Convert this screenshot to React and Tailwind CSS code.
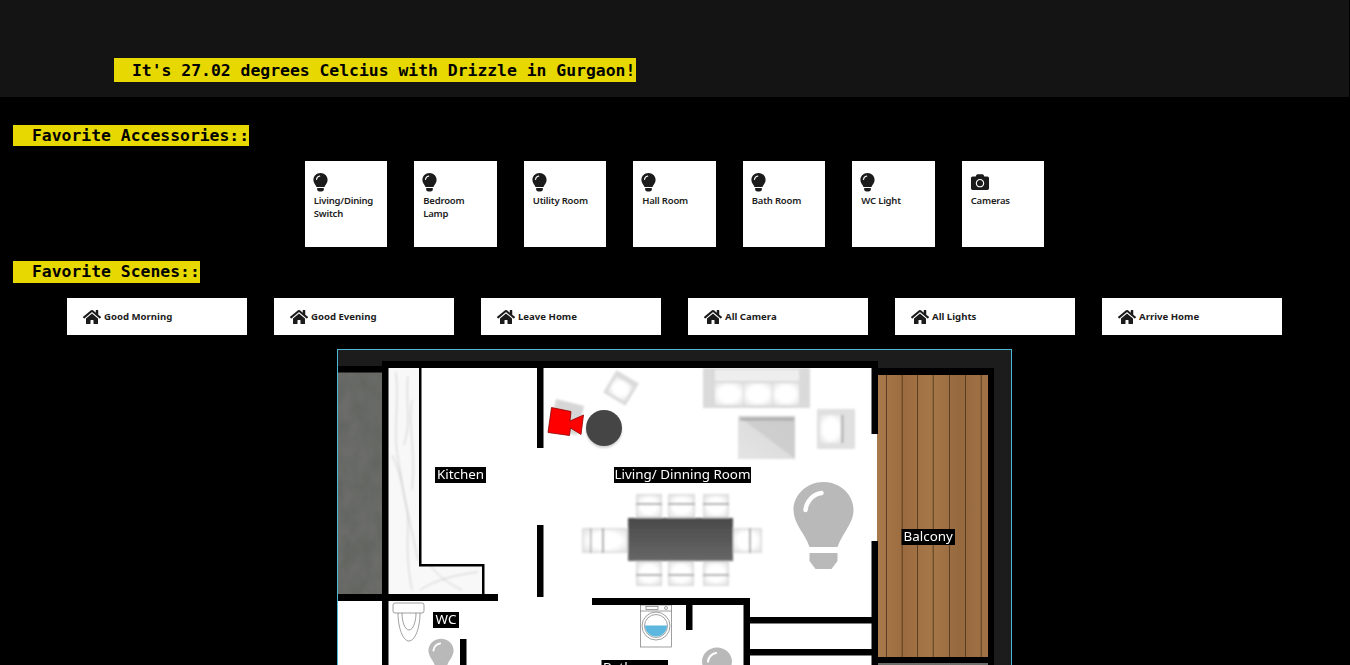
import React from 'react'
import { FaCamera, FaHome } from 'react-icons/fa'

const accessories = [
  { name: 'Living/Dining Switch', icon: 'bulb' },
  { name: 'Bedroom Lamp', icon: 'bulb' },
  { name: 'Utility Room', icon: 'bulb' },
  { name: 'Hall Room', icon: 'bulb' },
  { name: 'Bath Room', icon: 'bulb' },
  { name: 'WC Light', icon: 'bulb' },
  { name: 'Cameras', icon: 'camera' },
]

const scenes = ['Good Morning', 'Good Evening', 'Leave Home', 'All Camera', 'All Lights', 'Arrive Home']

function BulbIcon() {
  return (
    <svg width="15" height="19" viewBox="0 0 15 19" className="block -ml-px">
      <path d="M7.500 0C3.400 0 .4 3 .4 6.900c0 2.900 2.200 4.600 3.100 7.100h8c.9-2.500 3.100-4.200 3.100-7.100C14.600 3 11.600 0 7.500 0z" fill="#1b1b1b" />
      <path d="M3.500 6.500C3.700 4.700 5 3.300 6.800 3" fill="none" stroke="#fff" strokeWidth="1.100" strokeLinecap="round" />
      <path d="M4.200 15h6.600v1.200c0 1.300-1 2.300-2.300 2.300h-2c-1.300 0-2.300-1-2.300-2.300z" fill="#1b1b1b" />
    </svg>
  )
}

function Heading({ children, className }) {
  return (
    <div className={`w-fit bg-[#e6d800] font-['DejaVu_Sans_Mono',monospace] font-bold text-[16.4px] text-black whitespace-nowrap flex items-center ${className}`}>
      {children}
    </div>
  )
}

function Tile({ item }) {
  return (
    <div className="w-[82.5px] h-[86px] bg-white pl-[9px] pt-[12px] text-[#1c1c1c]">
      <div className="h-[20px]">
        {item.icon === 'bulb' ? <BulbIcon /> : <FaCamera className="w-[18px] h-[18px] text-[#1b1b1b]" />}
      </div>
      <div className="mt-px text-[9.5px] leading-[13px] font-semibold font-['Noto_Sans',sans-serif] tracking-[-0.2px] pr-[8px]">
        {item.name}
      </div>
    </div>
  )
}

function Scene({ name }) {
  return (
    <div className="w-[180px] h-[37px] bg-white pl-[16px] flex items-center gap-[3px] text-[#1c1c1c]">
      <FaHome className="w-[18px] h-[18px] text-[#1b1b1b]" />
      <span className="pt-px text-[9.6px] font-bold font-['Noto_Sans',sans-serif]">{name}</span>
    </div>
  )
}

function Bulb({ x, y, s = 1 }) {
  return (
    <g transform={`translate(${x} ${y}) scale(${s})`}>
      <path d="M0 -29C-17 -29 -30 -16 -30 -1C-30 13 -18 23 -14 36H14C18 23 30 13 30 -1C30 -16 17 -29 0 -29Z" fill="#b9b9b9" />
      <path d="M-18 -1C-17 -10 -10 -17 -2 -18" fill="none" stroke="#fff" strokeWidth="4.500" strokeLinecap="round" />
      <path d="M-14 42H14V50L8 58H-8L-14 50Z" fill="#b9b9b9" />
    </g>
  )
}

function Chair({ x, y, w, h, line }) {
  return (
    <g>
      <rect x={x} y={y} width={w} height={h} fill="#dcdcdc" />
      <rect x={x + 1.500} y={y + 1.500} width={w - 3} height={h - 3} fill="url(#cushion)" />
      {line}
    </g>
  )
}

function Label({ x, y, w, h = 16, children }) {
  return (
    <g>
      <rect x={x} y={y} width={w} height={h} fill="#000" />
      <text x={x + w / 2} y={y + 12.200} textAnchor="middle" fill="#fff" fontSize="13.400" fontFamily="'Noto Sans', sans-serif">{children}</text>
    </g>
  )
}

const planks = [886, 901.7, 917, 932.7, 949, 965, 980.7]

const walls = [
  [338, 366, 44, 6.500],
  [382, 361, 495.500, 7],
  [382, 361, 6.500, 305],
  [338, 594, 160, 7],
  [537, 368, 6.500, 80],
  [537, 525, 6.500, 72],
  [592, 598, 158, 7],
  [743.500, 598, 6.500, 68],
  [871.500, 361, 6.500, 73],
  [871.500, 541, 6.500, 125],
  [877, 368, 117, 7],
  [988, 368, 6, 298],
  [877, 657, 111, 6],
  [750, 617, 122, 6.500],
  [750, 649, 122, 6.500],
  [686, 605, 6.500, 25],
  [460, 639, 6.500, 27],
  [419, 368, 2.500, 197],
  [419, 564, 65, 2.500],
  [482, 564, 2.500, 30],
]

const topChairs = [
  [636, 494, 26, 24],
  [668, 494, 27, 24],
  [703, 494, 26, 24],
  [636, 561, 26, 25],
  [668, 561, 26, 25],
  [703, 561, 26, 25],
]

function FloorPlan() {
  return (
    <svg width="673" height="316" viewBox="338 350 673 316" className="block">
      <defs>
        <filter id="soft" x="-10%" y="-10%" width="120%" height="120%">
          <feGaussianBlur stdDeviation="0.800" />
        </filter>
        <filter id="mottle" x="0" y="0" width="100%" height="100%">
          <feTurbulence type="fractalNoise" baseFrequency="0.070 0.050" numOctaves="4" seed="4" />
          <feColorMatrix values="0 0 0 0 0.180  0 0 0 0 0.180  0 0 0 0 0.170  0.900 0 0 0 -0.200" />
        </filter>
        <radialGradient id="cushion" cx="0.500" cy="0.500" r="0.700">
          <stop offset="0.500" stopColor="#ffffff" />
          <stop offset="1" stopColor="#e2e2e2" />
        </radialGradient>
        <linearGradient id="wood" x1="0" y1="0" x2="1" y2="0">
          <stop offset="0" stopColor="#a8794a" />
          <stop offset="0.250" stopColor="#9c6c40" />
          <stop offset="0.500" stopColor="#a67747" />
          <stop offset="0.750" stopColor="#96683e" />
          <stop offset="1" stopColor="#a27346" />
        </linearGradient>
        <linearGradient id="tableTop" x1="0" y1="0" x2="0" y2="1">
          <stop offset="0" stopColor="#4a4a4a" />
          <stop offset="1" stopColor="#676767" />
        </linearGradient>
        <linearGradient id="coffee" x1="0" y1="1" x2="1" y2="0">
          <stop offset="0" stopColor="#e4e4e4" />
          <stop offset="0.500" stopColor="#dedede" />
          <stop offset="0.500" stopColor="#cfcfcf" />
          <stop offset="1" stopColor="#cbcbcb" />
        </linearGradient>
      </defs>

      <rect x="338" y="350" width="673" height="316" fill="#1c1c1c" />
      <rect x="338" y="368" width="540" height="298" fill="#fff" />
      <rect x="338" y="372" width="44" height="222" fill="#636561" />
      <rect x="338" y="372" width="44" height="222" filter="url(#mottle)" />

      <rect x="388" y="368" width="31" height="197" fill="#f8f8f8" />
      <rect x="388" y="565" width="95" height="29" fill="#f8f8f8" />
      <g fill="none" stroke="#c4c4c4" strokeWidth="0.800" filter="url(#soft)">
        <path d="M396 372C400 410 391 430 400 470C404 500 412 530 418 560" />
        <path d="M392 455C400 470 403 490 407 510C410 530 404 550 412 590" />
        <path d="M408 376C405 400 412 420 404 445" />
        <path d="M412 400C408 430 416 450 412 490" />
        <path d="M420 590C435 580 455 575 478 572" />
        <path d="M430 565C438 575 445 582 462 590" />
      </g>

      <rect x="877" y="375" width="111" height="282" fill="url(#wood)" />
      <g fill="#5a3d22">
        {planks.map((p) => <rect key={p} x={p} y="375" width="1" height="282" />)}
      </g>
      <rect x="877" y="663" width="111" height="3" fill="#6c6e6a" />

      <g filter="url(#soft)">
        <rect x="703" y="368" width="107" height="40" fill="#dadada" />
        <rect x="715" y="370" width="84" height="11" fill="#eeeeee" />
        <rect x="715" y="383" width="28" height="22" fill="url(#cushion)" />
        <rect x="744" y="383" width="28" height="22" fill="url(#cushion)" />
        <rect x="773" y="383" width="26" height="22" fill="url(#cushion)" />
        <rect x="738" y="416" width="57" height="43" fill="url(#coffee)" />
        <rect x="740" y="418" width="54" height="2.500" fill="#aaaaaa" />
        <rect x="817" y="409" width="38" height="40" fill="#e0e0e0" />
        <rect x="820" y="415" width="22" height="28" fill="url(#cushion)" />
        <rect x="841" y="415" width="2.500" height="28" fill="#b4b4b4" />
        <rect x="608" y="375" width="26" height="26" transform="rotate(31 621 388)" fill="#dadada" />
        <rect x="611" y="380" width="20" height="18" transform="rotate(31 621 388)" fill="url(#cushion)" />
        <rect x="552" y="402" width="29" height="30" transform="rotate(14 566 417)" fill="#d6d6d6" />

        {topChairs.map((c) => (
          <Chair key={`${c[0]}-${c[1]}`} x={c[0]} y={c[1]} w={c[2]} h={c[3]}
            line={<rect x={c[0]} y={c[1] === 494 ? c[1] + 9 : c[1] + 13} width={c[2]} height="2" fill="#a8a8a8" />} />
        ))}
        <Chair x={582} y={528} w={46} h={25}
          line={<g><rect x={590} y={528} width="1.500" height="25" fill="#a8a8a8" /><rect x={602} y={528} width="2" height="25" fill="#a8a8a8" /></g>} />
        <Chair x={732} y={528} w={30} h={25} line={<rect x={749} y={528} width="2" height="25" fill="#a8a8a8" />} />
        <rect x="628" y="518" width="105" height="43" fill="url(#tableTop)" />
        <circle cx="604" cy="430" r="18" fill="#9f9f9f" opacity="0.500" />
      </g>
      <circle cx="604" cy="428" r="18" fill="#454545" />

      <path d="M551.500 407.500L571 411.500L570 421L583.500 415L581 434.500L570.500 428L569.500 435.500L548 432.500Z" fill="#ff0000" stroke="#8a0000" strokeWidth="0.800" strokeLinejoin="round" />

      <Bulb x={823.500} y={511} />
      <Bulb x={441} y={651} s={0.420} />
      <Bulb x={717} y={662} s={0.500} />

      <g fill="none" stroke="#777" strokeWidth="0.700">
        <rect x="393" y="603" width="31" height="10" rx="2" />
        <path d="M398 613C398 628 403 641 409 641C415 641 420 628 420 613" />
        <path d="M402 613C402 622 405 630 409 630C413 630 416 622 416 613" />
        <rect x="640.500" y="605" width="31" height="42" />
        <path d="M640.500 611H671.500" />
        <rect x="646" y="606.500" width="12" height="3" />
        <circle cx="666" cy="608" r="1.500" />
        <circle cx="656" cy="626" r="14" />
        <circle cx="656" cy="626" r="11.500" />
      </g>
      <path d="M645 625.500A11 11 0 0 0 667 625.500Z" fill="#5db7de" />

      <g fill="#000">
        {walls.map((w, i) => <rect key={i} x={w[0]} y={w[1]} width={w[2]} height={w[3]} />)}
      </g>

      <Label x={435} y={467} w={51}>Kitchen</Label>
      <Label x={614} y={467} w={137}>Living/ Dinning Room</Label>
      <Label x={901.500} y={529} w={53.500}>Balcony</Label>
      <Label x={433} y={612} w={26}>WC</Label>
      <Label x={601.500} y={660} w={66.500}>Bathroom</Label>
    </svg>
  )
}

export default function App() {
  return (
    <div className="h-[665px] overflow-hidden bg-black pr-px">
      <div className="h-[97px] bg-[#141414] pt-[58px] pl-[114px]">
        <Heading className="h-[24px] pl-[18px] pr-px pt-[2px]">It's 27.02 degrees Celcius with Drizzle in Gurgaon!</Heading>
      </div>
      <Heading className="ml-[13px] mt-[28px] h-[21px] pl-[19px] pt-px">Favorite Accessories::</Heading>
      <div className="mt-[15px] flex justify-center gap-[27px]">
        {accessories.map((a) => <Tile key={a.name} item={a} />)}
      </div>
      <Heading className="ml-[13px] mt-[14px] h-[22px] pl-[19px] pt-px">Favorite Scenes::</Heading>
      <div className="mt-[15px] flex justify-center gap-[27px]">
        {scenes.map((s) => <Scene key={s} name={s} />)}
      </div>
      <div className="mt-[14px] mx-auto w-[675px] border border-[#4fb8d8]">
        <FloorPlan />
      </div>
    </div>
  )
}
